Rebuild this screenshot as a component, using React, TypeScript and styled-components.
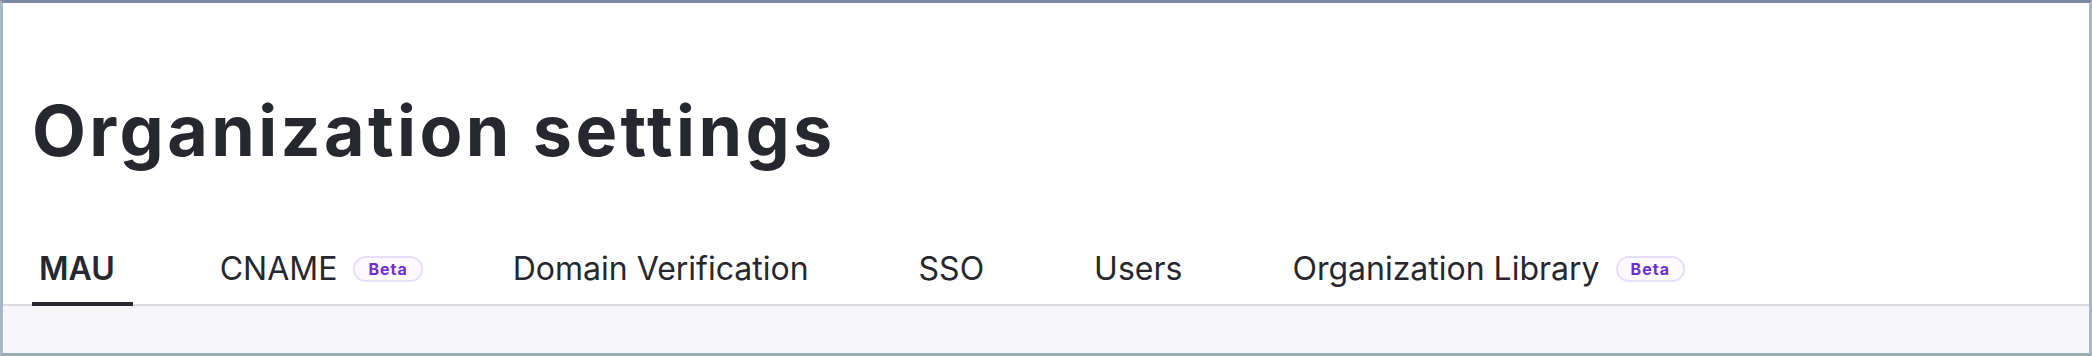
import React from "react";
import styled, { createGlobalStyle } from "styled-components";

const GlobalStyle = createGlobalStyle`
  html, body {
    margin: 0;
    padding: 0;
    background: #ffffff;
  }
  body {
    font-family: Inter, "Noto Sans", "Liberation Sans", sans-serif;
    color: #27282f;
  }
  * {
    box-sizing: border-box;
  }
`;

const tabs = [
  { label: "MAU", active: true },
  { label: "CNAME", beta: true },
  { label: "Domain Verification" },
  { label: "SSO" },
  { label: "Users" },
  { label: "Organization Library", beta: true },
];

const Frame = styled.div`
  width: 100%;
  height: 356px;
  display: flex;
  flex-direction: column;
  border-top: 3px solid #7d8aa3;
  border-left: 3px solid #a6b8c5;
  border-right: 3px solid #a6b8c5;
  border-bottom: 3px solid #9aacb3;
  background: #ffffff;
`;

const Header = styled.header`
  padding: 86px 0 0 29px;
  background: #ffffff;
  box-shadow: inset 0 -2px 0 #dcdce3;
`;

const Title = styled.h1`
  margin: 0;
  font-size: 70px;
  line-height: 84px;
  font-weight: 700;
  letter-spacing: 3.4px;
  color: #27282f;
`;

const TabBar = styled.nav`
  display: flex;
  align-items: flex-end;
  gap: 80px;
  margin-top: 76px;
`;

const Tab = styled.button<{ $active?: boolean; $beta?: boolean }>`
  display: flex;
  align-items: center;
  gap: 16px;
  padding: 0 ${(p) => (p.$beta ? "3px" : p.$active ? "18px" : "23px")} 13px 7px;
  border: none;
  border-bottom: 4px solid ${(p) => (p.$active ? "#27282f" : "transparent")};
  background: none;
  font-family: inherit;
  font-size: 32px;
  line-height: 40px;
  font-weight: ${(p) => (p.$active ? 600 : 400)};
  color: #27282f;
  cursor: pointer;
`;

const Badge = styled.span`
  display: inline-flex;
  align-items: center;
  justify-content: center;
  height: 26px;
  padding: 0 13px;
  border: 2px solid #e7def8;
  border-radius: 13px;
  background: #fcfaff;
  font-size: 16px;
  line-height: 1;
  font-weight: 700;
  letter-spacing: 1px;
  color: #6d2fd3;
`;

const Body = styled.main`
  flex: 1;
  background: #f7f7fa;
`;

export default function App() {
  return (
    <>
      <GlobalStyle />
      <Frame>
        <Header>
          <Title>Organization settings</Title>
          <TabBar>
            {tabs.map((t) => (
              <Tab key={t.label} $active={t.active} $beta={t.beta}>
                {t.label}
                {t.beta && <Badge>Beta</Badge>}
              </Tab>
            ))}
          </TabBar>
        </Header>
        <Body />
      </Frame>
    </>
  );
}
